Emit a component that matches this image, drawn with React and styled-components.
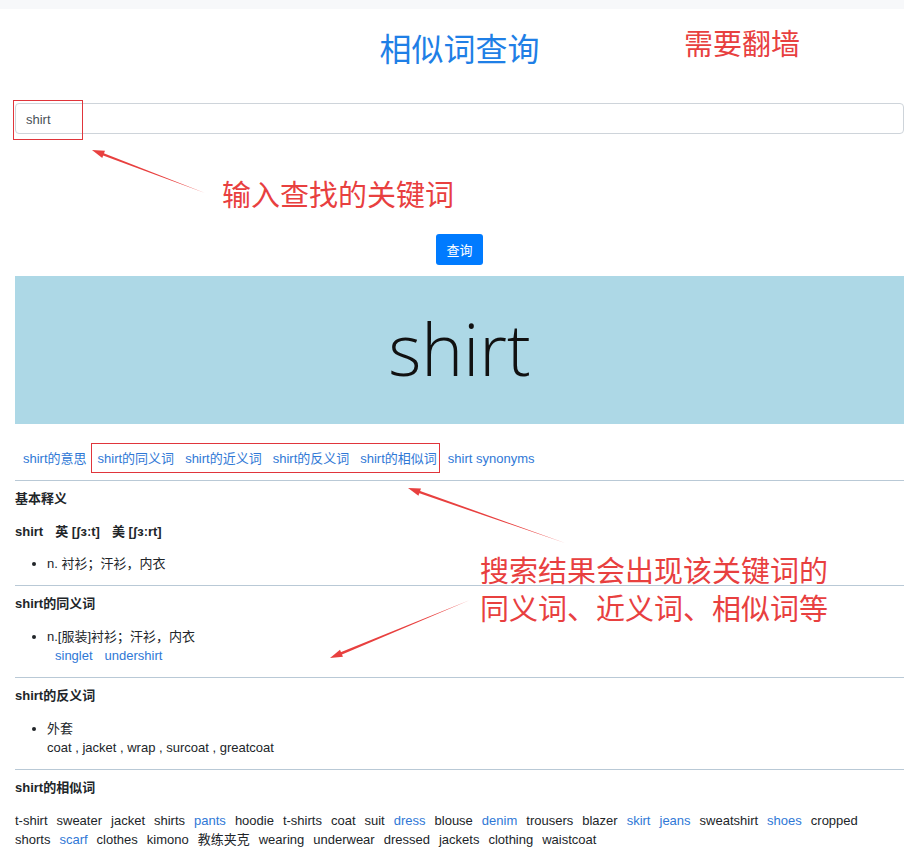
import styled, { createGlobalStyle } from "styled-components";

const GlobalStyle = createGlobalStyle`
  * { box-sizing: border-box; }
  body {
    margin: 0;
    background: #fff;
    color: #212529;
    font-family: "Liberation Sans", "Noto Sans CJK SC", sans-serif;
    font-size: 13px;
  }
`;

const TopBar = styled.div`
  height: 9px;
  background: #f7f8fa;
`;

const Page = styled.div`
  position: relative;
  padding-left: 15px;
  height: 850px;
  overflow: hidden;
`;

const Title = styled.h1`
  margin: 18px 0 0;
  text-align: center;
  font-family: "Noto Sans CJK SC", sans-serif;
  font-weight: 400;
  font-size: 32px;
  line-height: 40px;
  color: #1f7fe6;
`;

const SearchInput = styled.input`
  display: block;
  width: 100%;
  height: 31px;
  margin-top: 36px;
  padding: 2px 10px 0;
  border: 1px solid #ced4da;
  border-radius: 4px;
  font-family: "Liberation Sans", "Noto Sans CJK SC", sans-serif;
  font-size: 13px;
  color: #495057;
  outline: none;
`;

const ButtonRow = styled.div`
  display: flex;
  justify-content: center;
  margin-top: 100px;
`;

const SearchButton = styled.button`
  height: 31px;
  padding: 0 10px;
  border: none;
  border-radius: 3px;
  background: #007bff;
  color: #fff;
  font-family: "Noto Sans CJK SC", sans-serif;
  font-size: 13px;
`;

const Banner = styled.div`
  margin-top: 11px;
  height: 148px;
  background: #add8e6;
  display: flex;
  align-items: center;
  justify-content: center;
  font-family: "Open Sans", sans-serif;
  font-weight: 300;
  font-size: 71px;
  color: #111;
  padding-bottom: 4px;
`;

const Nav = styled.nav`
  display: flex;
  gap: 11px;
  padding: 0 8px;
  margin-top: 26px;
  height: 18px;
  line-height: 18px;
`;

const Link = styled.a`
  color: ${(p) => (p.$dark ? "#212529" : "#2f78d6")};
  text-decoration: none;
`;

const Rule = styled.hr`
  margin: ${(p) => p.$top || 12}px 0 0;
  border: none;
  border-top: 1px solid #b9c9d6;
`;

const Section = styled.section`
  padding-top: 9px;
`;

const Heading = styled.h4`
  margin: 0;
  font-size: 13px;
  font-weight: 700;
  line-height: 18px;
  & + & {
    margin-top: 15px;
  }
`;

const Phon = styled.span`
  margin-left: 12px;
`;

const List = styled.ul`
  margin: ${(p) => p.$top || 14}px 0 0;
  padding-left: 32px;
  line-height: 19px;
`;

const Syn = styled.div`
  padding-left: 8px;
  display: flex;
  gap: 12px;
`;

const Words = styled.div`
  margin-top: 14px;
  display: flex;
  flex-wrap: wrap;
  column-gap: 9px;
  line-height: 19px;
  padding-right: 20px;
`;

const Mark = styled.div`
  position: absolute;
  border: 1px solid #e0353b;
  pointer-events: none;
`;

const Note = styled.div`
  position: absolute;
  color: #e8403f;
  font-family: "Noto Sans CJK SC", sans-serif;
  font-size: 29px;
  line-height: 38px;
  white-space: nowrap;
`;

const Overlay = styled.svg`
  position: absolute;
  left: 0;
  top: 0;
  pointer-events: none;
`;

const Arrow = ({ x1, y1, x2, y2 }) => {
  const a = Math.atan2(y2 - y1, x2 - x1);
  const l = 13;
  const w = 0.3;
  const p1 = [x2 - l * Math.cos(a - w), y2 - l * Math.sin(a - w)];
  const p2 = [x2 - l * Math.cos(a + w), y2 - l * Math.sin(a + w)];
  const dx = -Math.sin(a) * 1.3;
  const dy = Math.cos(a) * 1.3;
  const ex = x2 - 8 * Math.cos(a);
  const ey = y2 - 8 * Math.sin(a);
  return (
    <g fill="#e8403f">
      <polygon points={`${x1},${y1} ${ex + dx},${ey + dy} ${ex - dx},${ey - dy}`} />
      <polygon points={`${x2},${y2} ${p1[0]},${p1[1]} ${p2[0]},${p2[1]}`} />
    </g>
  );
};

const similar = [
  ["t-shirt"], ["sweater"], ["jacket"], ["shirts"], ["pants", 1], ["hoodie"],
  ["t-shirts"], ["coat"], ["suit"], ["dress", 1], ["blouse"], ["denim", 1],
  ["trousers"], ["blazer"], ["skirt", 1], ["jeans", 1], ["sweatshirt"],
  ["shoes", 1], ["cropped"], ["shorts"], ["scarf", 1], ["clothes"], ["kimono"],
  ["教练夹克"], ["wearing"], ["underwear"], ["dressed"], ["jackets"],
  ["clothing"], ["waistcoat"],
];

export default function App() {
  return (
    <>
      <GlobalStyle />
      <TopBar />
      <Page>
        <Title>相似词查询</Title>
        <SearchInput defaultValue="shirt" />
        <ButtonRow>
          <SearchButton>查询</SearchButton>
        </ButtonRow>
        <Banner>shirt</Banner>

        <Nav>
          <Link>shirt的意思</Link>
          <Link>shirt的同义词</Link>
          <Link>shirt的近义词</Link>
          <Link>shirt的反义词</Link>
          <Link>shirt的相似词</Link>
          <Link>shirt synonyms</Link>
        </Nav>
        <Rule $top={12} />

        <Section>
          <Heading>基本释义</Heading>
          <Heading>
            shirt<Phon>英 [ʃɜːt]</Phon>
            <Phon>美 [ʃɜːrt]</Phon>
          </Heading>
          <List $top={13}>
            <li>n. 衬衫；汗衫，内衣</li>
          </List>
        </Section>
        <Rule />

        <Section>
          <Heading>shirt的同义词</Heading>
          <List>
            <li>
              n.[服装]衬衫；汗衫，内衣
              <Syn>
                <Link>singlet</Link>
                <Link>undershirt</Link>
              </Syn>
            </li>
          </List>
        </Section>
        <Rule />

        <Section>
          <Heading>shirt的反义词</Heading>
          <List>
            <li>
              外套
              <div>coat , jacket , wrap , surcoat , greatcoat</div>
            </li>
          </List>
        </Section>
        <Rule />

        <Section>
          <Heading>shirt的相似词</Heading>
          <Words>
            {similar.map(([w, blue]) => (
              <Link key={w} $dark={!blue}>
                {w}
              </Link>
            ))}
          </Words>
        </Section>

        <Mark style={{ left: 13, top: 91, width: 70, height: 40 }} />
        <Mark style={{ left: 91, top: 434, width: 349, height: 30 }} />
        <Note style={{ left: 684, top: 14 }}>需要翻墙</Note>
        <Note style={{ left: 222, top: 165 }}>输入查找的关键词</Note>
        <Note style={{ left: 480, top: 541 }}>搜索结果会出现该关键词的</Note>
        <Note style={{ left: 480, top: 579 }}>同义词、近义词、相似词等</Note>
        <Overlay width="904" height="850">
          <Arrow x1={205} y1={184} x2={92} y2={141} />
          <Arrow x1={565} y1={534} x2={408} y2={479} />
          <Arrow x1={470} y1={591} x2={330} y2={649} />
        </Overlay>
      </Page>
    </>
  );
}
